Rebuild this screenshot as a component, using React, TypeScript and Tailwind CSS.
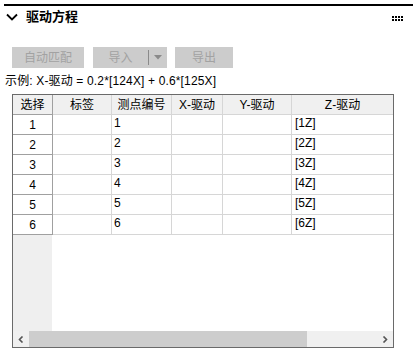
import React from "react";

const F = "font-['Liberation_Sans','Noto_Sans_CJK_SC',sans-serif]";

function Chevron() {
  return (
    <svg width="12" height="8" viewBox="0 0 12 8" className="block">
      <path d="M1 1.5 L6 6.5 L11 1.5" fill="none" stroke="#000" strokeWidth="1.8" />
    </svg>
  );
}

function Dots() {
  return (
    <div className="grid grid-cols-4 gap-[1px]">
      {Array.from({ length: 8 }).map((_, i) => (
        <div key={i} className="w-[2px] h-[2px] bg-black" />
      ))}
    </div>
  );
}

const cols = [
  { w: "w-[40px]", label: "选择" },
  { w: "w-[59px]", label: "标签" },
  { w: "w-[60px]", label: "测点编号" },
  { w: "w-[51px]", label: "X-驱动" },
  { w: "w-[69px]", label: "Y-驱动" },
  { w: "flex-1", label: "Z-驱动" },
];

export default function App() {
  const rows = [1, 2, 3, 4, 5, 6];
  return (
    <div className={`w-[413px] h-[354px] bg-white overflow-hidden text-black ${F}`}>
      <div className="pt-[4px] pl-[4px]">
        <div className="h-[2px] bg-black" />
      </div>
      {/* header */}
      <div className="h-[21px] flex items-center pl-[6px] pr-[10px]">
        <Chevron />
        <span className="ml-[8px] text-[13px] font-bold leading-none">驱动方程</span>
        <div className="ml-auto mt-[4px]">
          <Dots />
        </div>
      </div>
      {/* buttons */}
      <div className="mt-[20px] flex items-center pl-[12px] h-[21px]">
        <div className="w-[72px] h-[21px] bg-[#cccccc] text-[#a2a2a2] text-[12px] flex items-center justify-center leading-none">
          自动匹配
        </div>
        <div className="ml-[9px] w-[74px] h-[21px] bg-[#cccccc] text-[#a2a2a2] text-[12px] flex items-center leading-none">
          <div className="w-[55px] flex justify-center">导入</div>
          <div className="w-[1px] h-[15px] bg-[#8a8a8a]" />
          <div className="flex-1 flex justify-center">
            <svg width="8" height="5" viewBox="0 0 8 5">
              <path d="M0 0 L8 0 L4 4.5 Z" fill="#8a8a8a" />
            </svg>
          </div>
        </div>
        <div className="ml-[8px] w-[58px] h-[21px] bg-[#cccccc] text-[#a2a2a2] text-[12px] flex items-center justify-center leading-none">
          导出
        </div>
      </div>
      <div className="mt-[4px] pl-[5px] h-[18px] flex items-center text-[12px] tracking-[0.15px] leading-none">
        示例: X-驱动 = 0.2*[124X] + 0.6*[125X]
      </div>
      {/* table */}
      <div className="mt-[4px] ml-[12px] w-[382px] h-[254px] border border-[#6a6a6a] flex flex-col text-[12px] leading-none">
        <div className="h-[20px] flex bg-[#f0f0f0]">
          {cols.map((c, i) => (
            <div
              key={i}
              className={`${c.w} h-[20px] flex items-center justify-center border-b ${
                i === 0 ? "border-r border-[#a0a0a0]" : i < 5 ? "border-r border-[#d6d6d6] border-b-[#d6d6d6]" : "border-[#d6d6d6]"
              }`}
            >
              {c.label}
            </div>
          ))}
        </div>
        {rows.map((r) => (
          <div key={r} className="h-[20px] flex">
            <div className="w-[40px] h-[20px] border-r border-b border-[#a0a0a0] flex items-center justify-center bg-white">
              {r}
            </div>
            <div className="w-[59px] h-[20px] border-r border-b border-[#d6d6d6]" />
            <div className="w-[60px] h-[20px] border-r border-b border-[#d6d6d6] pl-[2px] pt-[2px]">{r}</div>
            <div className="w-[51px] h-[20px] border-r border-b border-[#d6d6d6]" />
            <div className="w-[69px] h-[20px] border-r border-b border-[#d6d6d6]" />
            <div className="flex-1 h-[20px] border-b border-[#d6d6d6] pl-[3px] pt-[2px]">[{r}Z]</div>
          </div>
        ))}
        <div className="flex-1 flex">
          <div className="w-[39px] bg-[#efefef]" />
        </div>
        <div className="h-[16px] flex bg-[#f0f0f0]">
          <div className="w-[16px] flex items-center justify-center">
            <svg width="6" height="7" viewBox="0 0 6 7">
              <path d="M4.5 0.5 L1.5 3.5 L4.5 6.5" fill="none" stroke="#555" strokeWidth="1.6" />
            </svg>
          </div>
          <div className="w-[278px] bg-[#cdcdcd]" />
          <div className="flex-1" />
          <div className="w-[16px] flex items-center justify-center">
            <svg width="6" height="7" viewBox="0 0 6 7">
              <path d="M1.5 0.5 L4.5 3.5 L1.5 6.5" fill="none" stroke="#555" strokeWidth="1.6" />
            </svg>
          </div>
        </div>
      </div>
    </div>
  );
}
